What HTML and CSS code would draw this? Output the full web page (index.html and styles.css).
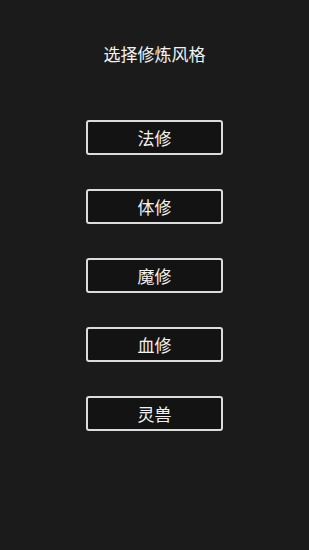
FILE: index.html
```html
<!DOCTYPE html>
<html lang="zh">
<head>
    <meta charset="UTF-8">
    <meta name="viewport" content="width=device-width, initial-scale=1.0">
    <title>选择修炼风格</title>
    <link rel="stylesheet" href="styles.css">
</head>
<body>
    <div class="screen">
        <h1 class="title">选择修炼风格</h1>
        <div class="menu">
            <button class="style-btn">法修</button>
            <button class="style-btn">体修</button>
            <button class="style-btn">魔修</button>
            <button class="style-btn">血修</button>
            <button class="style-btn">灵兽</button>
        </div>
    </div>
</body>
</html>
```

FILE: styles.css
```css
* {
    margin: 0;
    padding: 0;
    box-sizing: border-box;
    font-family: "Noto Sans CJK SC", "Noto Sans", sans-serif;
}

body {
    background: #1b1b1b;
    min-height: 100vh;
    color: #f0f0f0;
}

.screen {
    display: flex;
    flex-direction: column;
    align-items: center;
    padding-top: 42px;
}

.title {
    font-size: 17px;
    font-weight: normal;
    line-height: 24px;
    color: #f2f2f2;
}

.menu {
    display: flex;
    flex-direction: column;
    align-items: center;
    gap: 34px;
    margin-top: 54px;
}

.style-btn {
    width: 137px;
    height: 35px;
    background: #131313;
    border: 2px solid #dcdcdc;
    border-radius: 3px;
    color: #f2f2f2;
    font-size: 17px;
    line-height: 1;
}
```
